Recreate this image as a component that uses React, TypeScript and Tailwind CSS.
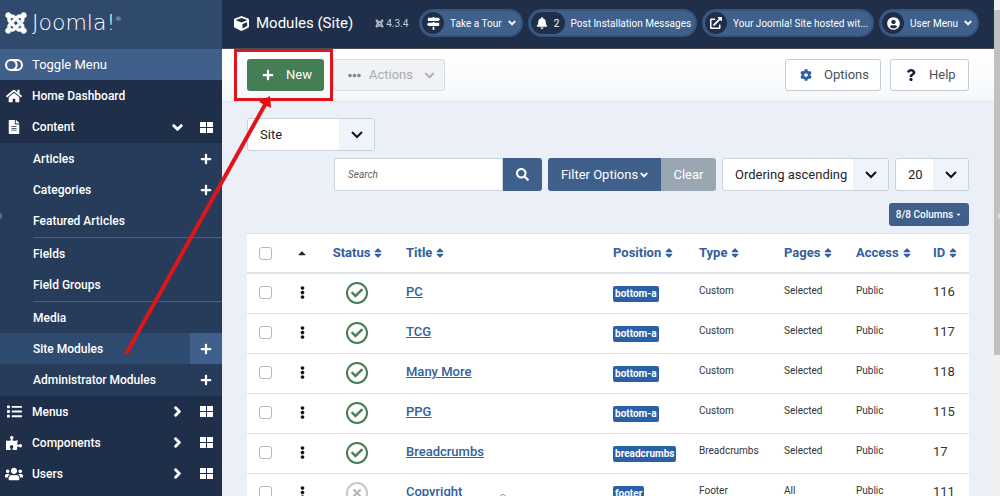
import type { ReactNode } from 'react';
import {
  FaBell, FaCaretDown, FaCaretUp, FaCheck, FaChevronDown, FaChevronRight, FaCog, FaCube, FaEllipsisH,
  FaEllipsisV, FaExternalLinkAlt, FaFileAlt, FaHome, FaJoomla, FaList, FaMapSigns, FaPlus,
  FaPuzzlePiece, FaQuestion, FaSearch, FaSort, FaTimes, FaUserCircle, FaUsers,
} from 'react-icons/fa';

interface ModuleRow {
  id: number;
  title: string;
  position: string;
  type: string;
  pages: string;
  published: boolean;
}

const modules: ModuleRow[] = [
  { id: 116, title: 'PC', position: 'bottom-a', type: 'Custom', pages: 'Selected', published: true },
  { id: 117, title: 'TCG', position: 'bottom-a', type: 'Custom', pages: 'Selected', published: true },
  { id: 118, title: 'Many More', position: 'bottom-a', type: 'Custom', pages: 'Selected', published: true },
  { id: 115, title: 'PPG', position: 'bottom-a', type: 'Custom', pages: 'Selected', published: true },
  { id: 17, title: 'Breadcrumbs', position: 'breadcrumbs', type: 'Breadcrumbs', pages: 'Selected', published: true },
  { id: 111, title: 'Copyright', position: 'footer', type: 'Footer', pages: 'All', published: false },
];

function ToggleIcon() {
  return (
    <svg width="18" height="12" viewBox="0 0 18 12" fill="none" stroke="currentColor" strokeWidth="2">
      <rect x="1" y="1" width="16" height="10" rx="5" />
      <path d="M8 1.2a5 5 0 0 1 0 9.6" />
    </svg>
  );
}

function GridIcon() {
  return (
    <svg width="13" height="11" viewBox="0 0 13 11" fill="currentColor">
      <path d="M0 0h6v5H0zM7 0h6v5H7zM0 6h6v5H0zM7 6h6v5H7z" />
    </svg>
  );
}

interface MainItemProps {
  icon: ReactNode;
  label: string;
  open?: boolean;
}

function MainItem({ icon, label, open = false }: MainItemProps) {
  return (
    <div className={`flex items-center ${open ? 'h-8' : 'h-[31px]'}`}>
      <a href="#" className="flex flex-1 items-center">
        <span className="flex w-8 justify-center pr-1">{icon}</span>
        {label}
      </a>
      <button aria-label={`Expand ${label}`} className="mr-[3px] flex w-5 justify-center">
        {open ? <FaChevronDown size={11} strokeWidth={50} /> : <FaChevronRight size={11} strokeWidth={50} />}
      </button>
      <a href="#" aria-label={`${label} dashboard`} className="flex w-8 justify-center">
        <GridIcon />
      </a>
    </div>
  );
}

interface SubItemProps {
  label: string;
  add?: boolean;
  active?: boolean;
}

function SubItem({ label, add = false, active = false }: SubItemProps) {
  return (
    <div className={`flex h-[31px] items-center pl-[33px] ${active ? 'bg-[#2f4a6f]' : ''}`}>
      <a href="#" className="flex-1">{label}</a>
      {add && (
        <a
          href="#"
          aria-label={`Add ${label}`}
          className={`flex h-full w-8 items-center justify-center ${active ? 'bg-[#3e608b]' : ''}`}
        >
          <FaPlus size={12} />
        </a>
      )}
    </div>
  );
}

function Sidebar() {
  return (
    <aside className="w-[222px] shrink-0 overflow-hidden bg-[#1f2f4a] text-xs font-medium text-white">
      <div className="flex h-[49px] items-center gap-1 bg-[#304a6d] pb-1 pl-1">
        <FaJoomla size={24} strokeWidth={12} />
        <span className="flex font-['DejaVu_Sans_Light','DejaVu_Sans',sans-serif] text-[22px] font-extralight leading-7">
          Joomla!
          <sup className="top-0 pt-1 text-[6px] leading-3">®</sup>
        </span>
      </div>
      <button className="flex h-[31px] w-full items-center bg-[#3e608b] text-[13px] font-normal">
        <span className="flex w-8 justify-center pr-1"><ToggleIcon /></span>
        Toggle Menu
      </button>
      <nav>
        <a href="#" className="flex h-[31px] items-center">
          <span className="flex w-8 justify-center pr-1"><FaHome size={16} /></span>
          Home Dashboard
        </a>
        <MainItem icon={<FaFileAlt size={14} />} label="Content" open />
        <div className="bg-[#263c5a] pb-px">
          <SubItem label="Articles" add />
          <SubItem label="Categories" add />
          <SubItem label="Featured Articles" />
          <hr className="ml-[33px] mt-px border-[#416388]" />
          <SubItem label="Fields" />
          <SubItem label="Field Groups" />
          <hr className="ml-[33px] mt-px border-[#416388]" />
          <SubItem label="Media" />
          <SubItem label="Site Modules" add active />
          <SubItem label="Administrator Modules" add />
        </div>
        <MainItem icon={<FaList size={15} />} label="Menus" />
        <MainItem icon={<FaPuzzlePiece size={16} />} label="Components" />
        <MainItem icon={<FaUsers size={18} />} label="Users" />
      </nav>
    </aside>
  );
}

interface PillProps {
  icon: ReactNode;
  label: string;
  count?: number;
  menu?: boolean;
}

function Pill({ icon, label, count, menu = false }: PillProps) {
  return (
    <button className="flex h-7 items-center whitespace-nowrap rounded-full border-2 border-[#36547f] bg-[#3e608b] pl-px pr-1 text-[10px] text-white">
      <span className={`mr-[6px] flex h-[22px] items-center justify-center gap-[6px] rounded-full bg-[#1f2f4a] ${count ? 'w-[34px]' : 'w-[22px]'}`}>
        {icon}
        {count}
      </span>
      {label}
      {menu && <FaChevronDown size={8} strokeWidth={60} className="ml-[6px] mr-px" />}
    </button>
  );
}

function Header() {
  return (
    <header className="flex h-[49px] items-center border-b border-[#4b4a54] bg-[#1f2f4a] pb-[2px] pl-3 pr-[15px] text-white">
      <FaCube size={15} className="shrink-0" />
      <h1 className="ml-[7px] whitespace-nowrap text-[15px] leading-5">Modules (Site)</h1>
      <span className="ml-[22px] flex items-center gap-[2px] text-[10px] text-[#c3cbd8]">
        <FaJoomla size={9} />
        4.3.4
      </span>
      <div className="ml-auto flex gap-[5px]">
        <Pill icon={<FaMapSigns size={13} />} label="Take a Tour" menu />
        <Pill icon={<FaBell size={12} />} label="Post Installation Messages" count={2} />
        <Pill icon={<FaExternalLinkAlt size={12} />} label="Your Joomla! Site hosted wit..." />
        <Pill icon={<FaUserCircle size={13} />} label="User Menu" menu />
      </div>
    </header>
  );
}

function Toolbar() {
  return (
    <div className="flex h-[53px] items-center border-b border-[#dde4ea] bg-linear-to-b from-white to-[#f5f8fb] px-[25px] text-[13px] text-[#495057]">
      <div className="relative">
        <button className="flex h-8 w-[77px] items-center gap-3 rounded-[3px] bg-[#457d54] pl-[15px] text-white">
          <FaPlus size={12} />
          New
        </button>
        {/* Callout around the New button */}
        <div className="pointer-events-none absolute -bottom-[10px] -left-[13px] -right-[9px] -top-[10px] z-10 border-3 border-[#e0141b]" />
      </div>
      <button disabled className="ml-[9px] flex h-8 w-28 items-center rounded-[3px] border border-[#d8dcdf] bg-[#f0f2f3] pl-[14px] text-[#a8acb0]">
        <FaEllipsisH size={13} className="text-[#83878b]" />
        <span className="ml-2">Actions</span>
        <FaChevronDown size={11} className="ml-[11px]" />
      </button>
      <button className="ml-auto flex h-8 w-24 items-center gap-3 rounded-[3px] border border-[#c6cbd0] bg-white pl-[14px]">
        <FaCog size={12} className="text-[#2a60a8]" />
        Options
      </button>
      <button className="ml-[9px] flex h-8 w-[79px] items-center gap-3 rounded-[3px] border border-[#c6cbd0] bg-white pl-[14px]">
        <FaQuestion size={12} className="text-[#132238]" />
        Help
      </button>
    </div>
  );
}

interface SelectBoxProps {
  label: string;
  value: string;
  className: string;
}

function SelectBox({ label, value, className }: SelectBoxProps) {
  return (
    <div className={`relative h-[33px] overflow-hidden rounded-[3px] border border-[#c9d1dc] bg-white ${className}`}>
      <select aria-label={label} className="h-full w-full appearance-none pl-3 text-[13px] text-[#22262a]">
        <option>{value}</option>
      </select>
      <span className="pointer-events-none absolute inset-y-0 right-0 flex w-[35px] items-center justify-center bg-[#eff4fb]">
        <svg width="12" height="8" viewBox="0 0 12 8" fill="none" stroke="#111" strokeWidth="2">
          <path d="M1 1l5 5 5-5" />
        </svg>
      </span>
    </div>
  );
}

function Filters() {
  return (
    <div className="flex flex-col gap-[7px]">
      <SelectBox label="Client" value="Site" className="w-32" />
      <div className="flex justify-end gap-[6px] text-[13px]">
        <div className="flex h-[33px] w-52">
          <input
            type="text"
            aria-label="Search"
            placeholder="Search"
            className="min-w-0 flex-1 rounded-l-[3px] border border-[#c9d1dc] bg-white px-[13px] text-[10px] placeholder:italic placeholder:text-[#5c6066]"
          />
          <button aria-label="Search" className="flex w-[39px] items-center justify-center rounded-r-[3px] bg-[#3e608b] text-white">
            <FaSearch size={13} />
          </button>
        </div>
        <div className="flex h-[33px] text-white">
          <button className="flex w-[113px] items-center justify-center gap-[2px] rounded-l-[3px] bg-[#3e608b]">
            Filter Options
            <FaChevronDown size={8} strokeWidth={60} />
          </button>
          <button className="w-[55px] rounded-r-[3px] bg-[#9ba6b3]">Clear</button>
        </div>
        <SelectBox label="Ordering" value="Ordering ascending" className="w-[167px]" />
        <SelectBox label="Items per page" value="20" className="w-[74px]" />
      </div>
      <button className="mt-[5px] flex h-[23px] w-20 items-center justify-center gap-[2px] self-end rounded-[3px] bg-[#3e608b] text-[10px] font-medium text-white">
        8/8 Columns
        <FaCaretDown size={7} />
      </button>
    </div>
  );
}

function SortHead({ label, center = false }: { label: string; center?: boolean }) {
  return (
    <th className={center ? 'pl-1' : 'pl-3 text-left'}>
      <a href="#" className="inline-flex items-center gap-[2px]">
        {label}
        <FaSort size={12} />
      </a>
    </th>
  );
}

function CheckBox({ label }: { label: string }) {
  return (
    <input
      type="checkbox"
      aria-label={label}
      className="block size-[13px] appearance-none rounded-[3px] border border-[#b3b8bd] bg-white"
    />
  );
}

function ModulesTable() {
  return (
    <table className="mt-[7px] w-full table-fixed border-separate border-spacing-0 bg-white">
      <colgroup>
        <col className="w-[38px]" />
        <col className="w-[34px]" />
        <col className="w-[75px]" />
        <col />
        <col className="w-[86px]" />
        <col className="w-[85px]" />
        <col className="w-[72px]" />
        <col className="w-[77px]" />
        <col className="w-12" />
      </colgroup>
      <thead>
        <tr className="h-[41px] text-[13px] font-bold text-[#33609c] *:border-b-2 *:border-t *:border-[#dee2e6]">
          <th className="pl-3"><CheckBox label="Check all items" /></th>
          <th><button aria-label="Sort by ordering" className="block w-full text-[#22262a]"><FaCaretUp size={12} className="mx-auto" /></button></th>
          <SortHead label="Status" center />
          <SortHead label="Title" />
          <SortHead label="Position" />
          <SortHead label="Type" />
          <SortHead label="Pages" />
          <SortHead label="Access" />
          <SortHead label="ID" />
        </tr>
      </thead>
      <tbody>
        {modules.map((m) => (
          <tr key={m.id} className="h-10 text-[10px] leading-[18px] text-[#30353a] *:border-b *:border-[#dee2e6] *:align-top">
            <td className="pl-3 pt-3"><CheckBox label={`Select ${m.title}`} /></td>
            <td className="pt-3"><FaEllipsisV size={13} className="mx-auto text-[#111]" /></td>
            <td className="pt-2">
              <button
                aria-label={m.published ? 'Published' : 'Unpublished'}
                className={`mx-auto flex size-[22px] items-center justify-center rounded-full border-2 ${
                  m.published ? 'border-[#457d54] text-[#457d54]' : 'border-[#c4c7ca] text-[#b4b8bb]'
                }`}
              >
                {m.published ? <FaCheck size={12} /> : <FaTimes size={12} />}
              </button>
            </td>
            <td className="pl-3 pt-2">
              <a href="#" className="block text-[13px] font-medium leading-5 text-[#33609c] underline">{m.title}</a>
            </td>
            <td className="pl-3 pt-3">
              <span className="block h-4 w-fit rounded-[2px] bg-[#2a60a8] px-[2px] text-[10px] font-bold leading-4 text-white">
                {m.position}
              </span>
            </td>
            <td className="pl-3 pt-2">{m.type}</td>
            <td className="pl-3 pt-2">{m.pages}</td>
            <td className="pl-3 pt-2">Public</td>
            <td className="pl-3 pt-2 text-[13px] leading-5">{m.id}</td>
          </tr>
        ))}
      </tbody>
    </table>
  );
}

export default function App() {
  return (
    <div className="relative flex h-screen overflow-hidden bg-[#ebf0f8] font-[Roboto,sans-serif]">
      <Sidebar />
      <div className="min-w-0 flex-1">
        <Header />
        <Toolbar />
        <main className="px-[25px] pt-4">
          <Filters />
          <ModulesTable />
        </main>
      </div>

      {/* Scroll track */}
      <div className="w-[6px] shrink-0 bg-[#f1f1f1] pt-[10px]">
        <div className="h-[345px] bg-[#c1c1c1]" />
      </div>

      {/* Arrow from Site Modules up to New */}
      <svg className="pointer-events-none absolute left-0 top-0 z-20" width="300" height="360" viewBox="0 0 300 360">
        <path d="M126 354L266 103" stroke="#e0141b" strokeWidth="4" />
        <path d="M270 96L271 108L259 102Z" fill="#f00a0a" />
      </svg>

      {/* Frame handles on the left, bottom and right edges */}
      <span className="absolute -left-1 top-[213px] size-[6px] rounded-full border border-[#8d9aac]" />
      <span className="absolute -bottom-1 left-1/2 size-[6px] rounded-full border border-[#8d9aac]" />
      <span className="absolute -right-1 top-[213px] size-[6px] rounded-full border border-white" />
    </div>
  );
}
